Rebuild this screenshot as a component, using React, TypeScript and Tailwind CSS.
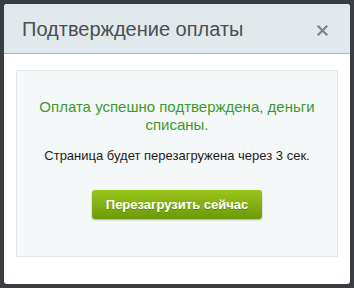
export default function App() {
  return (
    <div className="w-[354px] h-[288px] bg-[#3a3e42] pt-[4px] pl-[4px] overflow-hidden" style={{ fontFamily: '"Liberation Sans", Arial, sans-serif' }}>
      <div className="w-[346px] h-[280px] bg-white rounded-[3px] flex flex-col overflow-hidden">
        <div className="h-[50px] bg-[#e2e9ec] border-b border-[#aab4b9] flex items-center justify-between pl-[18px] pr-[22px] shrink-0">
          <span className="text-[20px] text-[#4a4f53] leading-none">Подтверждение оплаты</span>
          <svg width="11" height="11" viewBox="0 0 11 11" className="mt-[3px]">
            <path d="M1.5 1.5 L9.5 9.5 M9.5 1.5 L1.5 9.5" stroke="#7b858c" strokeWidth="2.2" strokeLinecap="square" />
          </svg>
        </div>
        <div className="px-[12px] pt-[16px]">
          <div className="h-[187px] bg-[#f5f8f9] border border-[#dfe5e8] flex flex-col items-center pt-[27px]">
            <p className="text-[15px] leading-[18px] text-[#3c9a2c] text-center px-[14px]">Оплата успешно подтверждена, деньги списаны.</p>
            <p className="text-[13px] leading-[16px] text-[#1c1c1c] mt-[14px]">Страница будет перезагружена через 3 сек.</p>
            <button className="mt-[26px] w-[170px] h-[29px] rounded-[3px] bg-gradient-to-b from-[#9ac51c] to-[#6c9a07] text-white text-[13px] font-bold shadow-[0_1px_2px_rgba(0,0,0,0.3)] [text-shadow:0_1px_0_rgba(0,0,0,0.25)]">Перезагрузить сейчас</button>
          </div>
        </div>
      </div>
    </div>
  );
}
